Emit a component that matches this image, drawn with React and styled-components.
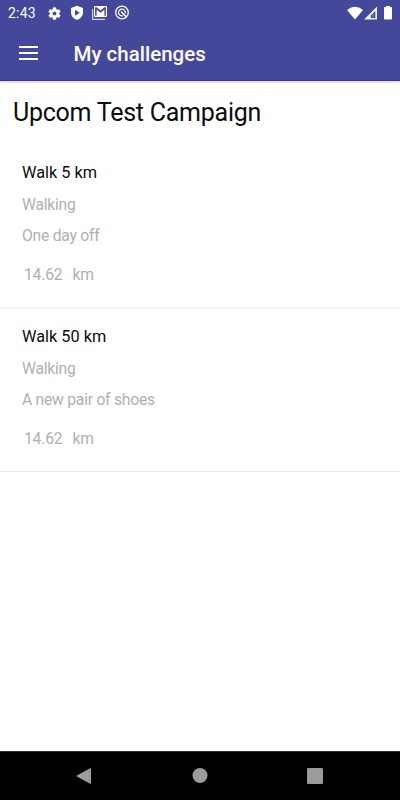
import React from "react";
import styled, { createGlobalStyle } from "styled-components";

const GlobalStyle = createGlobalStyle`
  * { box-sizing: border-box; }
  body { margin: 0; background: #fff; font-family: Roboto, "Liberation Sans", sans-serif; }
`;

const Screen = styled.div`
  width: 400px;
  height: 800px;
  display: flex;
  flex-direction: column;
  overflow: hidden;
  background: #fff;
`;

const Header = styled.header`
  height: 81px;
  flex: none;
  background: #45479b;
  color: #fff;
  box-shadow: 0 1px 2px rgba(0, 0, 0, 0.2);
  border-bottom: 1px solid #3538a0;
`;

const StatusBar = styled.div`
  height: 26px;
  display: flex;
  align-items: center;
  justify-content: space-between;
  padding: 0 7px 0 8px;
`;

const StatusGroup = styled.div`
  display: flex;
  align-items: center;
`;

const Clock = styled.span`
  width: 39px;
  font-size: 14px;
  line-height: 26px;
  letter-spacing: 0.2px;
`;

const StatusIcon = styled.svg`
  display: block;
  width: ${(p) => p.$w}px;
  height: ${(p) => p.$h || 16}px;
  margin-right: ${(p) => p.$gap || 0}px;
  fill: #fff;
`;

const Toolbar = styled.div`
  height: 54px;
  display: flex;
  align-items: center;
  padding-left: 19px;
`;

const MenuButton = styled.button`
  width: 19px;
  height: 14px;
  margin: 0 36px 1px 0;
  padding: 0;
  border: 0;
  background: none;
  display: flex;
  flex-direction: column;
  justify-content: space-between;
`;

const MenuBar = styled.span`
  height: 2px;
  background: #fff;
`;

const Title = styled.h1`
  margin: 0 0 0 -0.5px;
  padding-top: 2px;
  font-size: 20.5px;
  font-weight: 500;
  line-height: 24px;
`;

const Content = styled.main`
  flex: 1;
`;

const Campaign = styled.h2`
  height: 64px;
  margin: 0;
  padding: 16px 13px 0;
  font-size: 25px;
  font-weight: 400;
  line-height: 32px;
  letter-spacing: -0.25px;
  color: #0c0c0c;
`;

const Challenge = styled.article`
  height: 164px;
  padding: 11.5px 22px 0;
  border-bottom: 2px solid #f4f4f4;

  &:last-child {
    height: 163px;
    border-bottom: 1px solid #e9e9e9;
  }
`;

const Line = styled.p`
  margin: 0;
  font-size: ${(p) => (p.$primary ? 16.3 : 15.7)}px;
  font-weight: 400;
  line-height: ${(p) => (p.$primary ? 32 : 31)}px;
  letter-spacing: ${(p) => (p.$primary ? 0 : -0.25)}px;
  color: ${(p) => (p.$primary ? "#0c0c0c" : "#b0b0b0")};
`;

const Progress = styled.div`
  display: flex;
  gap: 10px;
  padding: 8.5px 0 0 2px;
  font-size: 15.7px;
  font-weight: 400;
  line-height: 31px;
  letter-spacing: -0.2px;
  color: #b0b0b0;
`;

const NavBar = styled.nav`
  height: 49px;
  flex: none;
  display: flex;
  align-items: center;
  padding-left: 76px;
  background: #000;
  border-top: 1px solid #303030;
`;

const NavIcon = styled.svg`
  display: block;
  width: 16px;
  height: 18px;
  fill: #9b9b9b;
  margin-right: ${(p) => p.$gap || 0}px;
`;

const challenges = [
  { name: "Walk 5 km", type: "Walking", reward: "One day off", value: "14.62" },
  { name: "Walk 50 km", type: "Walking", reward: "A new pair of shoes", value: "14.62" },
];

export default function App() {
  return (
    <Screen>
      <GlobalStyle />
      <Header>
        <StatusBar>
          <StatusGroup>
            <Clock>2:43</Clock>
            <StatusIcon $w={15} $h={15} $gap={8} viewBox="0 0 24 24">
              <path d="M19.14 12.94c.04-.3.06-.61.06-.94s-.02-.64-.07-.94l2.03-1.58a.49.49 0 0 0 .12-.61l-1.92-3.32a.49.49 0 0 0-.59-.22l-2.39.96a7 7 0 0 0-1.62-.94l-.36-2.54A.48.48 0 0 0 13.92 2.4h-3.84c-.24 0-.43.17-.47.41l-.36 2.54c-.59.24-1.13.57-1.62.94l-2.39-.96a.48.48 0 0 0-.59.22L2.74 8.87a.48.48 0 0 0 .12.61l2.03 1.58c-.05.3-.09.63-.09.94s.02.64.07.94l-2.03 1.58a.49.49 0 0 0-.12.61l1.92 3.32c.12.22.37.29.59.22l2.39-.96c.5.38 1.03.7 1.62.94l.36 2.54c.05.24.24.41.48.41h3.84c.24 0 .44-.17.47-.41l.36-2.54a7 7 0 0 0 1.62-.94l2.39.96c.22.08.47 0 .59-.22l1.92-3.32a.48.48 0 0 0-.12-.61ZM12 15.3a3.3 3.3 0 1 1 0-6.6 3.3 3.3 0 0 1 0 6.6Z" stroke="#fff" strokeWidth=".4" />
            </StatusIcon>
            <StatusIcon $w={14} $gap={8} viewBox="0 0 14 16">
              <path fillRule="evenodd" d="M7 .8 13 3v4.4c0 3.4-2.4 6.3-6 7.4C3.4 13.7 1 10.8 1 7.4V3ZM5 4.7v6l4.8-3Z" />
            </StatusIcon>
            <StatusIcon $w={15} $gap={8} viewBox="0 0 15 16">
              <path d="M0 4h1.2v9.800H13V15H0Z" opacity=".75" />
              <path fillRule="evenodd" d="M3 1h11a1 1 0 0 1 1 1v9a1 1 0 0 1-1 1H3a1 1 0 0 1-1-1V2a1 1 0 0 1 1-1Zm.1 1.300v8.500h1.500V4.800l3.900 3 3.900-3v6h1.500V2.300h-1.500L8.500 5.500 4.600 2.300Z" />
            </StatusIcon>
            <StatusIcon $w={14} viewBox="0 0 14 16">
              <circle cx="7" cy="7.500" r="6.300" fill="none" stroke="#fff" strokeWidth="1.300" />
              <path d="M8 10.700A3.400 3.400 0 1 1 10.200 8.400" fill="none" stroke="#fff" strokeWidth="1.200" />
              <path d="m6 6.500 5.200 5.200" stroke="#fff" strokeWidth="1.600" />
            </StatusIcon>
          </StatusGroup>
          <StatusGroup>
            <StatusIcon $w={16} $h={14} $gap={1} viewBox="0 0 16 14">
              <path d="M0 4Q8-2.500 16 4L8 13.500Z" />
            </StatusIcon>
            <StatusIcon $w={13} $h={14} $gap={6} viewBox="0 0 13 14">
              <path fillRule="evenodd" d="M13 .5V13.500H0ZM11.300 5 6.800 9.500V12H11.300Z" opacity=".9" />
              <path d="M8.500 8.500 10 7.200V11H8.500Z" opacity=".3" />
            </StatusIcon>
            <StatusIcon $w={10} $h={14} viewBox="0 0 10 14">
              <path d="M3 1V0h4v1h1.200q.8 0 .8.800v10.900q0 .8-.8.800H1.800q-.8 0-.8-.8V1.800Q1 1 1.800 1Z" />
            </StatusIcon>
          </StatusGroup>
        </StatusBar>
        <Toolbar>
          <MenuButton aria-label="Menu"><MenuBar /><MenuBar /><MenuBar /></MenuButton>
          <Title>My challenges</Title>
        </Toolbar>
      </Header>
      <Content>
        <Campaign>Upcom Test Campaign</Campaign>
        {challenges.map((c) => (
          <Challenge key={c.name}>
            <Line $primary>{c.name}</Line>
            <Line>{c.type}</Line>
            <Line>{c.reward}</Line>
            <Progress><span>{c.value}</span><span>km</span></Progress>
          </Challenge>
        ))}
      </Content>
      <NavBar>
        <NavIcon $gap={100} viewBox="0 0 16 18"><path d="M0 9 15 .800V17.200Z" /></NavIcon>
        <NavIcon $gap={99} viewBox="0 0 16 18"><circle cx="8" cy="8.500" r="7.500" /></NavIcon>
        <NavIcon viewBox="0 0 16 18"><rect y="1" width="16" height="16" rx="1.200" /></NavIcon>
      </NavBar>
    </Screen>
  );
}
